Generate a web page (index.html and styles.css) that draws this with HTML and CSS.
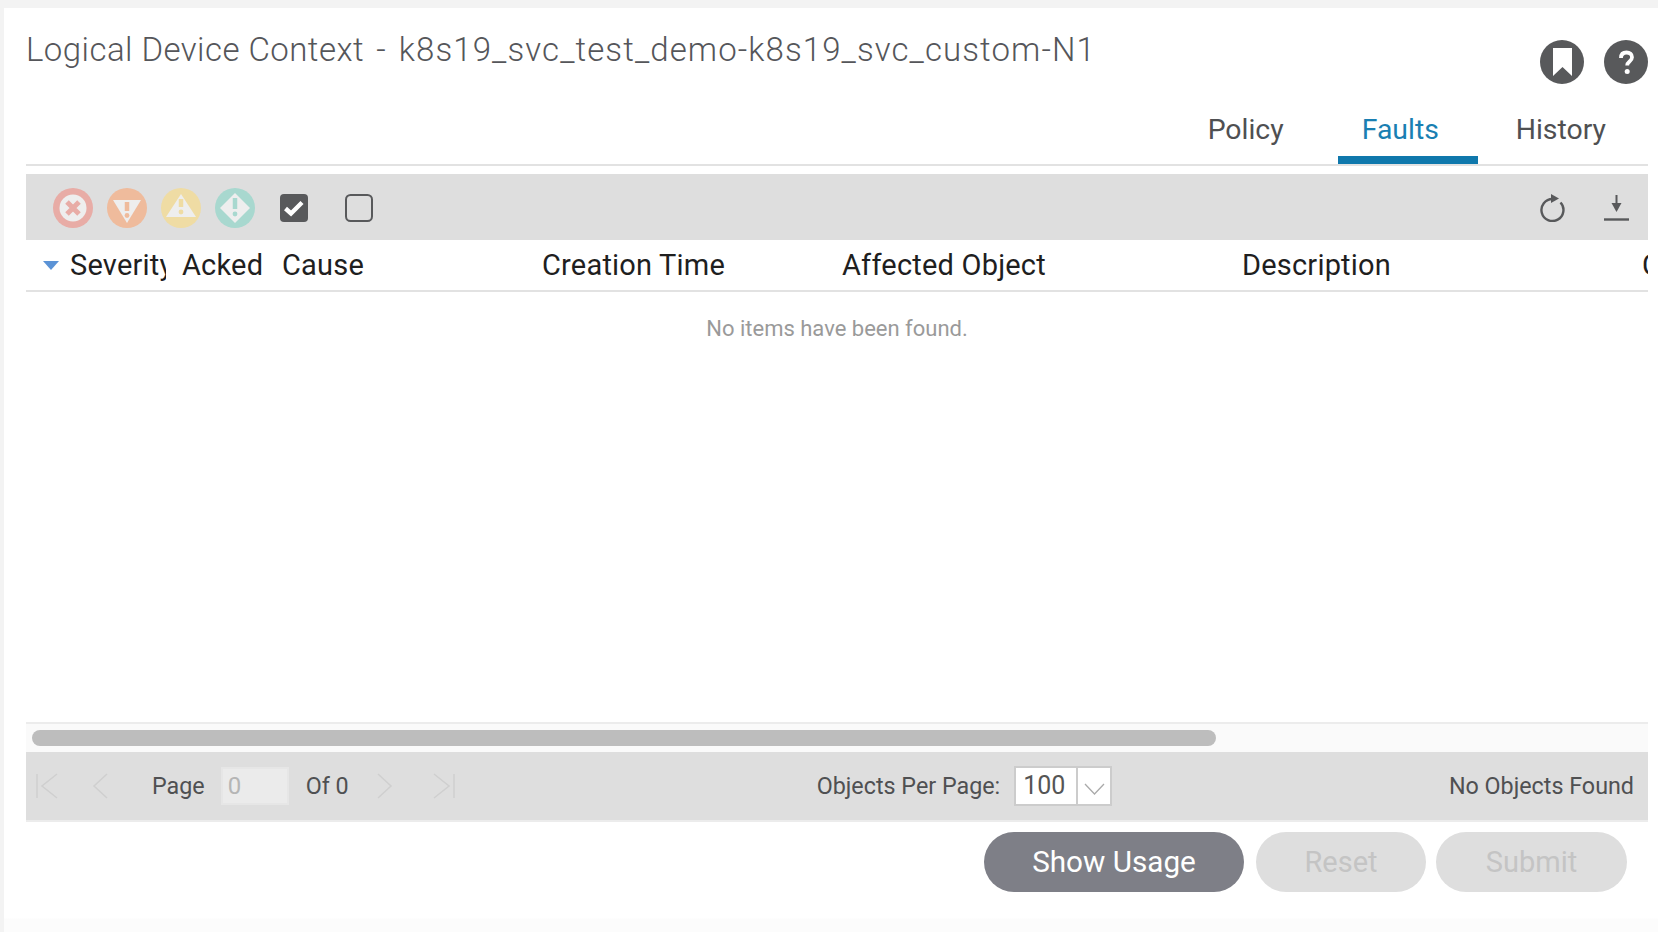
FILE: index.html
```html
<!DOCTYPE html>
<html>
<head>
  <meta charset="UTF-8">
  <title>Logical Device Context</title>
  <link rel="stylesheet" href="styles.css">
</head>
<body>

  <div class="panel">

    <div class="head">
      <h1 class="title"><span class="title-name">Logical Device Context</span> <span class="title-dash">-</span> k8s19_svc_test_demo-k8s19_svc_custom-N1</h1>
      <div class="head-icons">
        <svg class="round-icon" viewBox="0 0 44 44">
          <circle cx="22" cy="22" r="22" fill="#58595b"/>
          <path d="M13 8h19v28l-9.500-9-9.500 9z" fill="#fff"/>
        </svg>
        <svg class="round-icon" viewBox="0 0 44 44">
          <circle cx="22" cy="22" r="22" fill="#58595b"/>
          <path d="M17 18c0-3.500 2-5.500 5.500-5.500 3.400 0 5.500 1.900 5.500 4.700 0 2.300-1.200 3.400-2.700 4.600-1.500 1.200-2.100 1.900-2.100 3.700" fill="none" stroke="#fff" stroke-width="3.800"/>
          <circle cx="23.200" cy="31.500" r="2.500" fill="#fff"/>
        </svg>
      </div>
    </div>

    <div class="tabs">
      <div class="tab">Policy</div>
      <div class="tab active">Faults</div>
      <div class="tab">History</div>
    </div>

    <div class="toolbar">
      <!-- severity filters -->
      <svg class="sev" viewBox="0 0 40 40">
        <circle cx="20" cy="20" r="20" fill="#e8aca6"/>
        <circle cx="20" cy="20" r="13.500" fill="#eee"/>
        <path d="M14 14l12 12M26 14l-12 12" stroke="#e8aca6" stroke-width="5"/>
      </svg>
      <svg class="sev" viewBox="0 0 40 40">
        <circle cx="20" cy="20" r="20" fill="#efbb9c"/>
        <path d="M6 12h28L20 35z" fill="#eee"/>
        <path d="M20 14v9" stroke="#efbb9c" stroke-width="4.500"/>
        <circle cx="20" cy="27.500" r="2.400" fill="#efbb9c"/>
      </svg>
      <svg class="sev" viewBox="0 0 40 40">
        <circle cx="20" cy="20" r="20" fill="#efdca4"/>
        <path d="M20 6l15 23H5z" fill="#eee"/>
        <path d="M20 11v8" stroke="#efdca4" stroke-width="4.500"/>
        <circle cx="20" cy="24" r="2.400" fill="#efdca4"/>
      </svg>
      <svg class="sev" viewBox="0 0 40 40">
        <circle cx="20" cy="20" r="20" fill="#a8d8cf"/>
        <path d="M20 5l15 15-15 15L5 20z" fill="#eee"/>
        <path d="M20 10v11" stroke="#a8d8cf" stroke-width="4.500"/>
        <circle cx="20" cy="26" r="2.400" fill="#a8d8cf"/>
      </svg>
      <svg class="check first-check" viewBox="0 0 28 28">
        <rect width="28" height="28" rx="4" fill="#58595b"/>
        <path d="M5.500 14.500l5.500 5 11-11" fill="none" stroke="#fff" stroke-width="4.400"/>
      </svg>
      <svg class="check" viewBox="0 0 28 28">
        <rect x="1" y="1" width="26" height="26" rx="4.500" fill="none" stroke="#58595b" stroke-width="2"/>
      </svg>

      <svg class="tool refresh" viewBox="0 0 25 28">
        <path d="M12.500 5A11 11 0 1 0 20.500 8.500" fill="none" stroke="#58595b" stroke-width="2.400"/>
        <path d="M11 0l8 4.500-8 4.500z" fill="#58595b"/>
      </svg>
      <svg class="tool" viewBox="0 0 25 28">
        <path d="M12.500 1v10" stroke="#58595b" stroke-width="2"/>
        <path d="M7.500 9h10l-5 9z" fill="#58595b"/>
        <path d="M0 25.500h25" stroke="#58595b" stroke-width="2.400"/>
      </svg>
    </div>

    <div class="columns">
      <div class="col col-sev"><span class="caret"></span><span class="clip">Severity</span></div>
      <div class="col">Acked</div>
      <div class="col">Cause</div>
      <div class="col">Creation Time</div>
      <div class="col">Affected Object</div>
      <div class="col">Description</div>
      <div class="col">Code</div>
    </div>

    <div class="empty">No items have been found.</div>

    <div class="scroll-track"><div class="scroll-thumb"></div></div>

    <div class="pager">
      <svg class="nav" viewBox="0 0 22 26"><path d="M1 1v24M21 1L6 13l15 12" fill="none" stroke="#cfcfcf" stroke-width="1.500"/></svg>
      <svg class="nav nav-prev" viewBox="0 0 16 26"><path d="M15 1L2 13l13 12" fill="none" stroke="#cfcfcf" stroke-width="1.500"/></svg>
      <span class="page-label">Page</span>
      <input class="page-input" type="text" value="0" disabled>
      <span class="of-label">Of 0</span>
      <svg class="nav nav-next" viewBox="0 0 16 26"><path d="M1 1l13 12L1 25" fill="none" stroke="#cfcfcf" stroke-width="1.500"/></svg>
      <svg class="nav nav-last" viewBox="0 0 22 26"><path d="M21 1v24M1 1l15 12L1 25" fill="none" stroke="#cfcfcf" stroke-width="1.500"/></svg>

      <span class="per-page">Objects Per Page:</span>
      <div class="select">
        <span class="select-value">100</span>
        <span class="select-arrow">
          <svg viewBox="0 0 21 12"><path d="M1 1l9.500 10L20 1" fill="none" stroke="#aaa" stroke-width="1.300"/></svg>
        </span>
      </div>

      <span class="found">No Objects Found</span>
    </div>

    <div class="actions">
      <button class="btn btn-usage">Show Usage</button>
      <button class="btn btn-reset" disabled>Reset</button>
      <button class="btn btn-submit" disabled>Submit</button>
    </div>

  </div>

</body>
</html>
```

FILE: styles.css
```css
body {
  margin: 0;
  background-color: #f3f3f3;
  font-family: Roboto, "Liberation Sans", sans-serif;
  color: #4f5052;
  overflow: hidden;
}

.panel {
  height: 924px;
  margin: 8px 0 0 4px;
  padding: 0 10px 0 22px;
  background: linear-gradient(#fff 910px, #fcfcfc 911px);
}

.head {
  display: flex;
  justify-content: space-between;
  height: 92px;
}

.title {
  margin: 0;
  padding-top: 23px;
  font-size: 33px;
  line-height: 38px;
  font-weight: 300;
  letter-spacing: 1.09px;
  white-space: nowrap;
  color: #55565a;
}

.title-name {
  margin-right: 3px;
  letter-spacing: 0.45px;
}

.title-dash {
  margin-right: 3px;
}

.head-icons {
  display: flex;
  gap: 20px;
  padding-top: 32px;
}

.round-icon {
  width: 44px;
  height: 44px;
}

.tabs {
  display: flex;
  justify-content: flex-end;
  gap: 14px;
  height: 64px;
  padding-right: 2px;
  border-bottom: 2px solid #e2e2e2;
}

.tab {
  box-sizing: border-box;
  height: 64px;
  padding: 11px 40px 0 24px;
  font-size: 28.4px;
  line-height: 38px;
}

.tab.active {
  width: 140px;
  padding-right: 0;
  border-bottom: 8px solid #0f78ac;
  color: #1a7fb2;
}

.toolbar {
  box-sizing: border-box;
  display: flex;
  align-items: center;
  height: 66px;
  margin-top: 8px;
  padding: 2px 19px 0 27px;
  background-color: #dedede;
}

.sev {
  width: 40px;
  height: 40px;
  margin-right: 14px;
}

.check {
  width: 28px;
  height: 28px;
  margin-right: 37px;
}

.first-check {
  margin-left: 11px;
}

.tool {
  width: 25px;
  height: 28px;
}

.refresh {
  margin-left: auto;
  margin-right: 39px;
}

.columns {
  display: grid;
  grid-template-columns: 156px 100px 260px 300px 400px 400px 1fr;
  height: 50px;
  border-bottom: 2px solid #e2e2e2;
  font-size: 29px;
  line-height: 50px;
  letter-spacing: 0.2px;
  color: #1f1f1f;
  overflow: hidden;
}

.col {
  white-space: nowrap;
  overflow: hidden;
}

.col-sev {
  display: flex;
  align-items: center;
}

.caret {
  width: 0;
  height: 0;
  margin-left: 17px;
  margin-right: 11px;
  border-left: 8px solid transparent;
  border-right: 8px solid transparent;
  border-top: 9px solid #5b93d6;
}

.clip {
  width: 96px;
  overflow: hidden;
}

.empty {
  height: 430px;
  padding-top: 22px;
  box-sizing: border-box;
  text-align: center;
  font-size: 22px;
  line-height: 30px;
  color: #9a9a9a;
}

.scroll-track {
  box-sizing: border-box;
  height: 30px;
  padding: 6px 0 0 6px;
  border-top: 2px solid #ececec;
  background-color: #fafafa;
}

.scroll-thumb {
  width: 1184px;
  height: 16px;
  border-radius: 8px;
  background-color: #bdbdbd;
}

.pager {
  box-sizing: border-box;
  display: flex;
  align-items: center;
  height: 70px;
  padding: 0 14px 0 10px;
  border-bottom: 2px solid #ececec;
  background-color: #dedede;
  font-size: 23.3px;
}

.nav {
  height: 26px;
  width: 22px;
}

.nav-prev {
  width: 16px;
  margin-left: 34px;
}

.page-label {
  margin-left: 44px;
}

.page-input {
  box-sizing: border-box;
  width: 68px;
  height: 38px;
  margin-left: 16px;
  padding: 0 0 0 5px;
  border: 2px solid #e6e6e6;
  background-color: #ebebeb;
  font-family: inherit;
  font-size: 24px;
  color: #b5b5b5;
}

.of-label {
  margin-left: 17px;
}

.nav-next {
  width: 16px;
  margin-left: 28px;
}

.nav-last {
  margin-left: 40px;
}

.per-page {
  margin-left: 362px;
}

.select {
  box-sizing: border-box;
  display: flex;
  width: 98px;
  height: 40px;
  margin-left: 14px;
  border: 2px solid #ccc;
  background-color: #fff;
  color: #555;
}

.select-value {
  box-sizing: border-box;
  width: 60px;
  padding-left: 7px;
  font-size: 25px;
  line-height: 36px;
}

.select-arrow {
  flex: 1;
  display: flex;
  align-items: center;
  justify-content: center;
  padding-top: 6px;
  border-left: 2px solid #ccc;
}

.select-arrow svg {
  width: 21px;
  height: 12px;
}

.found {
  margin-left: auto;
}

.actions {
  display: flex;
  justify-content: flex-end;
  gap: 10px;
  margin-top: 10px;
  padding-right: 21px;
}

.btn {
  height: 60px;
  padding: 0;
  border: none;
  border-radius: 30px;
  font-family: inherit;
  font-size: 29px;
  background-color: #dedede;
  color: #c4c4c4;
}

.btn-usage {
  width: 260px;
  margin-right: 2px;
  padding-bottom: 2px;
  font-size: 29.7px;
  background-color: #7e7f87;
  color: #fff;
}

.btn-reset {
  width: 170px;
}

.btn-submit {
  width: 191px;
}
```
